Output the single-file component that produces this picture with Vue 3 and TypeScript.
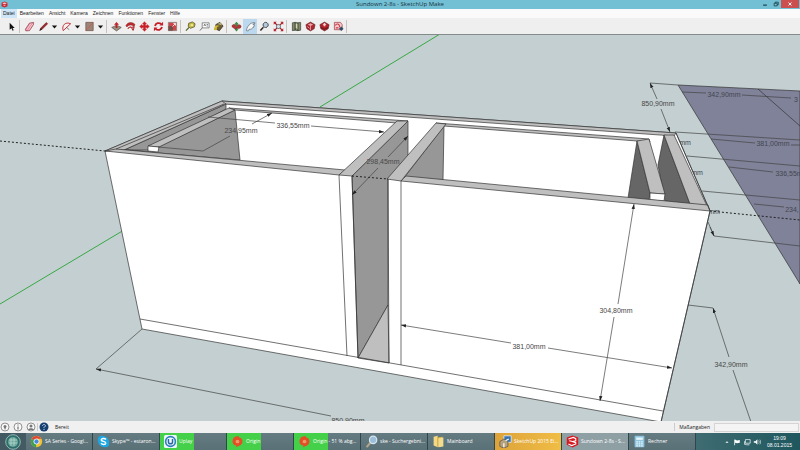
<script setup lang="ts">
import { ref } from 'vue'

interface Shape { d: string; fill?: string; stroke?: string; w?: number }
interface Tool { id: string; label: string; kind?: 'sep' | 'caret'; shapes?: Shape[] }

const active = ref('hand')
const measure = ref('')

const menus = ['Datei', 'Bearbeiten', 'Ansicht', 'Kamera', 'Zeichnen', 'Funktionen', 'Fenster', 'Hilfe']

const sep = (id: string): Tool => ({ id, label: '', kind: 'sep' })
const caret = (id: string): Tool => ({ id, label: 'Weitere Werkzeuge', kind: 'caret', shapes: [{ d: 'M2.5 4.5H9.5L6 8.5Z', fill: '#111' }] })

const tools: Tool[] = [
  { id: 'select', label: 'Auswählen', shapes: [{ d: 'M4 2V9.5L6 8L7.2 10.6L8.4 10L7.2 7.5H9.5Z', fill: '#111' }] },
  sep('s1'),
  { id: 'eraser', label: 'Radiergummi', shapes: [{ d: 'M1.5 9L6 2.2L10.5 1.5L10.3 4L6 10.5L2 10.8Z', fill: '#e58f9f', stroke: '#8b3644', w: 0.7 }, { d: 'M3 9.5L7.6 2.8M5 10L9.5 3.2', stroke: '#fbdfe3', w: 0.8 }] },
  { id: 'line', label: 'Linie', shapes: [{ d: 'M2 10.2L3 7.7L9 1.6L10.6 3L4.6 9Z', fill: '#a3242c', stroke: '#531419', w: 0.5 }, { d: 'M1.5 10.8L3 7.8L4.6 9Z', fill: '#222' }] },
  caret('c1'),
  { id: 'arc', label: 'Bogen', shapes: [{ d: 'M2.4 10.5C0.5 4.5 5 .5 10.5 3L2.4 10.5', fill: '#f8eeee', stroke: '#b82930', w: 1 }, { d: 'M6 7L9 9.5', stroke: '#444', w: 0.7 }] },
  caret('c2'),
  { id: 'rect', label: 'Rechteck', shapes: [{ d: 'M2 1.5H10V10.5H2Z', fill: '#9c8578', stroke: '#6e5148', w: 0.8 }, { d: 'M2 10.5L10 1.5', stroke: '#c9584e', w: 0.8 }] },
  caret('c3'),
  sep('s2'),
  { id: 'push', label: 'Drücken/Ziehen', shapes: [{ d: 'M.8 7L6 4.8L11.2 7L6 10.8Z', fill: '#9b9283', stroke: '#4d4741', w: 0.7 }, { d: 'M5 7.5V4.2H3.3L6 1L8.7 4.2H7V7.5Z', fill: '#c02026' }] },
  { id: 'follow', label: 'Folge mir', shapes: [{ d: 'M1 5C3 1 8 0.5 11 4L9.5 6C7 3.5 4 4 2 6.5Z', fill: '#c32930', stroke: '#72151b', w: 0.5 }, { d: 'M3 8.5C5 5.5 7 5.5 9 10.5M6 7L10 6.5L9 10', stroke: '#b22a30', w: 1.1 }] },
  { id: 'move', label: 'Verschieben', shapes: [{ d: 'M6 .7L8.2 3.2H7V5H8.8V3.8L11.3 6L8.8 8.2V7H7V8.8H8.2L6 11.3L3.8 8.8H5V7H3.2V8.2L.7 6L3.2 3.8V5H5V3.2H3.8Z', fill: '#c91f28', stroke: '#c91f28', w: 0.5 }] },
  { id: 'rotate', label: 'Drehen', shapes: [{ d: 'M2.2 5.5A4 4 0 0 1 9 3.5M9.8 6.5A4 4 0 0 1 3 8.5', stroke: '#c51e27', w: 2 }, { d: 'M7 4.8H11V.8ZM5 7.2H1V11.2Z', fill: '#c51e27' }] },
  { id: 'scale', label: 'Skalieren', shapes: [{ d: 'M1.5 1.5H10.5V10.5H1.5Z', fill: '#cf444b', stroke: '#8a7f7a', w: 0.8 }, { d: 'M1.5 5.5H6.5V10.5H1.5Z', fill: '#6f5048' }, { d: 'M6 6L9 3M7 2.7H9.3V5', stroke: '#fff', w: 0.9 }] },
  sep('s3'),
  { id: 'tape', label: 'Maßband', shapes: [{ d: 'M4 2.5L8 1L11 3L10.3 6.3L6 8L3.5 5.8Z', fill: '#c6bc42', stroke: '#4d4a2d', w: 0.8 }, { d: 'M6.2 3.5H8.7V5.5H6.2Z', fill: '#eee9a8' }, { d: 'M4.5 7L1 10.5', stroke: '#555b26', w: 1.3 }] },
  { id: 'text', label: 'Text', shapes: [{ d: 'M3.5 2H11V7.5H3.5Z', fill: '#fff', stroke: '#666', w: 0.8 }, { d: 'M5.3 5.5L6.3 3.5L7.2 5.5M8.3 3.8H9.8M8.3 5.5H9.8', stroke: '#333', w: 0.7 }, { d: 'M3.5 7.5L1 10.5', stroke: '#444', w: 0.8 }] },
  { id: 'paint', label: 'Farbeimer', shapes: [{ d: 'M3 4L7.5 1.5L11 5.5L7 10.5L3.5 9Z', fill: '#6c5b37', stroke: '#2e281e', w: 0.8 }, { d: 'M5 3.4L8 2L10 5Z', fill: '#c6ba7b' }, { d: 'M1 9.8C1 6 3 3 7 5.5L4.5 6.5L4 10Z', fill: '#d0b72e' }] },
  sep('s4'),
  { id: 'orbit', label: 'Rotieren', shapes: [{ d: 'M6 .8L8.2 3.4H7V9H8.2L6 11.4L3.8 9H5V3.4H3.8Z', fill: '#3e8b43' }, { d: 'M1 6C1 3.5 4 3.3 6 4.5C9 3.3 11 4.3 11 6C11 8.3 8 8.5 5.5 7.6L5 9L2 7Z', fill: '#b8333a', stroke: '#662225', w: 0.5 }, { d: 'M5 3.4H7V6H5Z', fill: '#3e8b43' }] },
  { id: 'hand', label: 'Schwenken', shapes: [{ d: 'M1.5 10.5C2 7 3.8 4.5 6.5 2.5L10.5 1.5L11 2.5L8.5 3.5L10.8 4.4L9.5 5.3L9.8 6.6L8.5 7C8 9 6 9.2 4.5 9L3.5 10.8Z', fill: '#f7f7f5', stroke: '#65717d', w: 0.8 }] },
  { id: 'zoom', label: 'Zoomen', shapes: [{ d: 'M4.8 6.7L1.5 10.4', stroke: '#2f2623', w: 1.6 }, { d: 'M7.3 1.5A2.8 2.8 0 1 1 7.2 1.5Z', fill: '#b7cadb', stroke: '#39404a', w: 1 }] },
  { id: 'extents', label: 'Zoom auf Modell', shapes: [{ d: 'M1.5 1.5L4.5 4.5M10.5 1.5L7.5 4.5M1.5 10.5L4.5 7.5M10.5 10.5L7.5 7.5', stroke: '#aa222a', w: 1.5 }, { d: 'M.8 .8H4L.8 4ZM11.2 .8V4L8 .8ZM.8 11.2V8L4 11.2ZM11.2 11.2H8L11.2 8Z', fill: '#b8202a' }, { d: 'M6 3.8A2.2 2.2 0 1 1 5.9 3.8Z', fill: '#d8dfe4', stroke: '#344044', w: 0.8 }] },
  sep('s5'),
  { id: 'map', label: 'Standort hinzufügen', shapes: [{ d: 'M1.5 2L4.5 1.5L7.5 2L10.5 1.5V10L7.5 10.5L4.5 10L1.5 10.5Z', fill: '#82896a', stroke: '#3e4638', w: 0.8 }, { d: 'M4.5 1.5V10M7.5 2V10.5', stroke: '#2d3529', w: 1 }, { d: 'M5.2 3H7V9L5.2 7Z', fill: '#d8d6ae' }] },
  { id: 'warehouse', label: '3D Warehouse', shapes: [{ d: 'M1 4L6 1.2L11 4L10 8.5L6 10.8L2 8.5Z', fill: '#aa2630', stroke: '#5d1a20', w: 0.6 }, { d: 'M3 4L6 2.5L9 4L6 5.5Z', fill: '#e9a7aa' }, { d: 'M6 5.5V10M2.5 6L5 8', stroke: '#efb9bc', w: 0.8 }] },
  { id: 'share', label: 'Modell teilen', shapes: [{ d: 'M1 4L6 1.2L11 4L10 8.5L6 10.8L2 8.5Z', fill: '#b32028', stroke: '#4c161b', w: 0.6 }, { d: 'M3.8 4L6 2L8.2 4H7V5.7H5V4Z', fill: '#f4d6d7' }, { d: 'M2 7L6 9L10 7', stroke: '#52151a', w: 0.9 }] },
  { id: 'layout', label: 'An LayOut senden', shapes: [{ d: 'M1.5 1.5H8.2L10 4V9.5H1.5Z', fill: '#f1cdd0', stroke: '#a73b43', w: 0.8 }, { d: 'M2.5 5C4 2 7 3 7.5 7M3 7.5H6', stroke: '#cf3a44', w: 1.2 }, { d: 'M9 6L11.5 8.5L9 11L6.5 8.5Z', fill: '#314e69' }] },
  sep('s6'),
]

interface Task { title: string; icon: string; progress?: number; look?: string }
const tasks: Task[] = [
  { title: 'SA Series - Googl...', icon: 'chrome' },
  { title: 'Skype™ - estaron...', icon: 'skype' },
  { title: 'Uplay', icon: 'uplay', progress: 51 },
  { title: 'Origin', icon: 'origin', progress: 51 },
  { title: 'Origin - 51 % abg...', icon: 'origin', progress: 51 },
  { title: 'ske - Suchergebni...', icon: 'search' },
  { title: 'Mainboard', icon: 'folder' },
  { title: 'SketchUp 2015 Ei...', icon: 'setup', look: 'alert' },
  { title: 'Sundown 2-8s - S...', icon: 'sketchup', look: 'current' },
  { title: 'Rechner', icon: 'calc' },
]

const light = '#bfbfbf'
const mid = '#979797'
const dark = '#666'

const faces = [
  { p: '105,151 222,101 676,133 710,211 661,422 142,329', f: '#fff' },
  { p: '222,101 676,133 674,136 224,104', f: light },
  { p: '124,150 226,104 226,109 150,150', f: mid },
  { p: '105,151 222,101 226,104 124,150', f: light },
  { p: '158,147 235,110 240,160 124,150 148,151', f: mid },
  { p: '229,108 408,121 397,123 235,110', f: light },
  { p: '148,146 229,108 235,110 159,147', f: light },
  { p: '148,146 159,147 158,152 148,151', f: '#fff' },
  { p: '105,151 116,149 345,170 339,175', f: light },
  { p: '352,176 408,121 408,156 388,179 388,305 358,358', f: mid },
  { p: '339,175 397,121 408,121 352,176', f: light },
  { p: '358,358 388,305 389,363', f: light },
  { p: '436,123 649,139 650,142 444,126', f: light },
  { p: '404,178 444,126 443,180', f: mid },
  { p: '387,179 436,123 446,124 401,181', f: light },
  { p: '637,141 628,198 649,200 650,193', f: dark },
  { p: '664,135 658,165 665,201 690,204', f: dark },
  { p: '637,141 649,139 665,194 650,193', f: light },
  { p: '650,193 665,194 664,201 650,200', f: '#fff' },
  { p: '664,135 674,135 707,206 690,204', f: light },
  { p: '401,181 406,176 708,205 710,211', f: light },
]

const edges = 'M116 149L224 104M140 319L663 411M339 175L347 356M352 176L358 358M388 179L389 363M401 181V365M676 133L710 211L661 422'

const plainDims = [
  'M158 147L203 151L230 136', 'M208 117L275 123', 'M650 83L678 85',
  'M675 132L800 140', 'M687 156L800 166', 'M702 191L800 200', 'M708 222L714 236L800 246',
  'M682 92L706 93', 'M742 95L791 98', 'M711 139L755 143', 'M791 145H800',
  'M729 167L773 172', 'M754 204L784 207', 'M688 305L713 308', 'M142 329L96 369',
  'M733 370L751 422',
]
const arrowDims = [
  'M252 124L272 113', 'M311 126L384 132', 'M388 157L408 136', 'M378 168L352 195',
  'M618 304L634 204', 'M614 317L600 401', 'M511 343L401 325', 'M548 348L672 368',
  'M729 357L713 308', 'M331 416L96 369', 'M657 99L650 83', 'M661 109L670 132', 'M710 227L714 236',
]

const labels = [
  { t: '336,55mm', x: 293, y: 128 }, { t: '234,95mm', x: 241, y: 133 },
  { t: '298,45mm', x: 383, y: 164 }, { t: '850,90mm', x: 658, y: 106 },
  { t: '304,80mm', x: 616, y: 313 }, { t: '381,00mm', x: 529, y: 349 },
  { t: '342,90mm', x: 731, y: 367 }, { t: '850,90mm', x: 348, y: 423 },
]
const backLabels = [
  { t: '342,90mm', x: 724, y: 97 }, { t: '3', x: 796, y: 102 },
  { t: '381,00mm', x: 773, y: 146 }, { t: '336,55m', x: 789, y: 176 },
  { t: '234,', x: 792, y: 212 }, { t: 'mm', x: 685, y: 145 },
  { t: 'mm', x: 697, y: 175 }, { t: 'mm', x: 714, y: 214 },
]
</script>

<template>
  <div class="window">
    <header class="titlebar">
      <svg class="app-icon" viewBox="0 0 12 12"><path d="M1 3L6 1L11 3V9L6 11L1 9Z" fill="#c72532" /><path d="M3 4L6 3L9 4L6 5ZM4 7L6 8L8 7" fill="#f3b8bc" stroke="#fff" stroke-width=".7" /></svg>
      <h1>Sundown 2-8s - SketchUp Make</h1>
      <div class="controls">
        <button aria-label="Minimieren"><svg viewBox="0 0 8 8"><path d="M1.5 5.5H6.5" stroke="#153944" stroke-width="1.5" /></svg></button>
        <button aria-label="Wiederherstellen"><svg viewBox="0 0 8 8"><path d="M3 3V1.5H7V5H5.5M1.5 3H5.5V6.5H1.5Z" fill="none" stroke="#153944" /></svg></button>
        <button class="close" aria-label="Schließen"><svg viewBox="0 0 8 8"><path d="M2 2L6 6M6 2L2 6" stroke="#fff" stroke-width="1.2" /></svg></button>
      </div>
    </header>

    <nav class="menubar">
      <button v-for="(m, i) in menus" :key="m" :class="{ open: i === 0 }">{{ m }}</button>
    </nav>

    <div class="toolbar">
      <template v-for="t in tools" :key="t.id">
        <span v-if="t.kind === 'sep'" class="sep"></span>
        <button v-else :class="{ caret: t.kind === 'caret', active: active === t.id }" :aria-label="t.label" @click="active = t.kind ? active : t.id">
          <svg viewBox="0 0 12 12">
            <path v-for="(s, i) in t.shapes" :key="i" :d="s.d" :fill="s.fill ?? 'none'" :stroke="s.stroke ?? 'none'" :stroke-width="s.w ?? 1" />
          </svg>
        </button>
      </template>
    </div>

    <main class="viewport">
      <svg class="model" viewBox="0 35 800 386" preserveAspectRatio="xMidYMin slice">
        <defs>
          <marker id="tip" viewBox="0 0 6 4" refX="6" refY="2" markerWidth="5" markerHeight="4" markerUnits="userSpaceOnUse" orient="auto"><path d="M0 0L6 2L0 4Z" fill="#222" /></marker>
        </defs>
        <path class="axis" d="M0 304L124 230M320 107L440 34" />
        <polygon points="678,85 800,91 800,284" fill="#7f8299" class="edge" />
        <path class="edge" d="M758 89L800 126" />
        <path class="dotted" d="M0 141L105 151M710 211L800 220" />
        <text v-for="(l, i) in backLabels" :key="i" :x="l.x" :y="l.y" class="dim-text back">{{ l.t }}</text>
        <polygon v-for="(f, i) in faces" :key="i" :points="f.p" :fill="f.f" class="edge" />
        <path class="edge" :d="edges" />
        <path class="dotted" d="M352 176L388 179" />
        <path v-for="d in plainDims" :key="d" :d="d" class="dim" />
        <path v-for="d in arrowDims" :key="d" :d="d" class="dim" marker-end="url(#tip)" />
        <text v-for="(l, i) in labels" :key="i" :x="l.x" :y="l.y" class="dim-text">{{ l.t }}</text>
      </svg>
    </main>

    <footer class="status">
      <svg viewBox="0 0 10 10"><circle cx="5" cy="5" r="4" class="ring" /><path d="M5 8L3.5 4.5A1.5 1.5 0 1 1 6.5 4.5Z" fill="#777" /></svg>
      <svg viewBox="0 0 10 10"><circle cx="5" cy="5" r="4" class="ring" /><path d="M5 2.5V3.5M5 4.5V7.5" stroke="#555" /></svg>
      <svg viewBox="0 0 10 10"><circle cx="5" cy="5" r="4" class="ring" /><circle cx="5" cy="4" r="1.5" fill="#777" /><path d="M2 8C2.5 5.5 7.5 5.5 8 8Z" fill="#777" /></svg>
      <i class="split"></i>
      <svg viewBox="0 0 10 10"><circle cx="5" cy="5" r="4.5" fill="#173f70" /><path d="M3.5 4C3.5 2 6.5 2 6.5 4L5 5.5V6.2M5 7V8" fill="none" stroke="#b9d2ea" /></svg>
      <span class="message">Bereit</span>
      <i class="split"></i>
      <label for="measure">Maßangaben</label>
      <input id="measure" v-model="measure" type="text" />
    </footer>

    <div class="taskbar">
      <button class="start" aria-label="Start">
        <svg viewBox="0 0 16 16"><circle cx="8" cy="8" r="7.3" fill="#2d6e6b" stroke="#91b8b3" /><circle cx="8" cy="8" r="5" fill="#6ba69b" /><path d="M4 6H12M4 9H12M6 4V12M9 4V12" stroke="#c2ded2" stroke-width=".7" /></svg>
      </button>
      <button v-for="(t, i) in tasks" :key="i" class="task" :class="t.look">
        <span v-if="t.progress" class="progress" :style="{ width: t.progress + '%' }"></span>
        <svg viewBox="0 0 16 16">
          <g v-if="t.icon === 'chrome'"><circle cx="8" cy="8" r="7" fill="#f2c331" /><path d="M8 8L2 4.5A7 7 0 0 1 14 4.5H8Z" fill="#dc4539" /><path d="M8 8L7.5 15A7 7 0 0 1 2 4.5Z" fill="#40a052" /><circle cx="8" cy="8" r="3.2" fill="#4b89df" stroke="#fff" /></g>
          <g v-else-if="t.icon === 'skype'"><circle cx="6" cy="6" r="5" fill="#1ba7e2" /><circle cx="10" cy="10" r="5" fill="#1ba7e2" /><circle cx="8" cy="8" r="6.5" fill="#1ba7e2" /><path d="M11 5.5C9.5 3.6 5 4 5.3 6.2C5.6 8.5 11 7.2 10.8 10C10.5 12.3 6.3 12.2 5 10" fill="none" stroke="#fff" stroke-width="1.8" /></g>
          <g v-else-if="t.icon === 'uplay'"><rect width="16" height="16" rx="2" fill="#edf6fa" /><circle cx="8" cy="8" r="6" fill="none" stroke="#2c80bc" stroke-width="2" /><path d="M5.5 5V8.5C5.5 11.5 10.5 11.5 10.5 8.5V5" fill="none" stroke="#2767a5" stroke-width="1.8" /></g>
          <g v-else-if="t.icon === 'origin'"><path d="M5 2L10 1L9 2.5C16 4 15 11 11 13L6 15L7 13C0 12 1 4 5 2Z" fill="#e44e25" /><circle cx="8" cy="8" r="2.3" fill="#e99a68" /></g>
          <g v-else-if="t.icon === 'search'"><path d="M7 9L2 15" stroke="#b4a68d" stroke-width="2.5" /><circle cx="10" cy="6" r="4.5" fill="#9bbfd8" stroke="#d6e5ef" stroke-width="1.5" /></g>
          <g v-else-if="t.icon === 'folder'"><path d="M2 2L7 1V15L2 13Z" fill="#f4d985" /><path d="M6 3L13 2V13L7 15Z" fill="#d9b44c" /><path d="M8 4L14 3V14L8 15Z" fill="#f2dc8d" /></g>
          <g v-else-if="t.icon === 'setup'"><path d="M6 1H15V9H6Z" fill="#3973ae" stroke="#e6eef5" /><path d="M1 8L6 5L11 8V14L6 16L1 14Z" fill="#b6a27d" stroke="#635c51" /><path d="M6 10V15M8 7L12 5" stroke="#fff" stroke-width="1.5" /></g>
          <g v-else-if="t.icon === 'sketchup'"><path d="M1 3L8 .5L15 3V12L8 15.5L1 12Z" fill="#d71920" /><path d="M3 5L9 3L12 4.5V7L8 8L12 9.5V11L7 13L3 11M4 7L8 8" fill="none" stroke="#fff" stroke-width="1.4" /></g>
          <g v-else><rect x="2" y="1" width="12" height="14" rx="1" fill="#8ec4de" /><path d="M4 3H12V6H4Z" fill="#e5f4fa" /><path d="M4 8.5H12M4 11H12M4 13.3H12" stroke="#e5f4fa" stroke-width="1.5" stroke-dasharray="2 1" /></g>
        </svg>
        <span class="task-title">{{ t.title }}</span>
      </button>
      <div class="tray">
        <svg viewBox="0 0 10 10"><path d="M3 6L5 4L7 6Z" fill="#fff" /></svg>
        <svg viewBox="0 0 10 10"><path d="M2 2V9" stroke="#fff" /><path d="M2.5 2L5 3L8.5 2.5V6L5 6.5L2.5 6Z" fill="#fff" /></svg>
        <svg viewBox="0 0 10 10"><path d="M3 2H9V6.5H3ZM4 8.5H8M2 4V8H4" fill="none" stroke="#e4f0f0" /></svg>
        <svg viewBox="0 0 10 10"><path d="M1 4H3L5.5 1.5V8.5L3 6H1Z" fill="#fff" /><path d="M7 3C8 4.5 8 5.5 7 7M8.5 2C10 4 10 6 8.5 8" fill="none" stroke="#e4f0f0" stroke-width=".8" /></svg>
        <time datetime="2015-01-08T19:09"><span>19:09</span><span>08.01.2015</span></time>
      </div>
    </div>
  </div>
</template>

<style>
body {
  margin: 0;
}
</style>

<style scoped>
.window {
  display: flex;
  flex-direction: column;
  height: 100vh;
  overflow: hidden;
  background: #f0f0f0;
  color: #222;
  font: 5px/7px 'Open Sans', 'Liberation Sans', sans-serif;
}
button {
  padding: 0;
  border: 0;
  background: none;
  color: inherit;
  font: inherit;
}
svg {
  display: block;
}
.titlebar {
  display: grid;
  grid-template-columns: 1fr auto 1fr;
  align-items: center;
  height: 9px;
  flex: none;
  background: #73bfd3;
}
.app-icon {
  width: 7px;
  height: 7px;
  margin-left: 1px;
}
h1 {
  margin: 0;
  color: #17333c;
  font-size: 6px;
  font-weight: 400;
  line-height: 9px;
}
.controls {
  display: flex;
  justify-content: flex-end;
  align-self: start;
}
.controls button {
  display: grid;
  place-items: center;
  width: 11px;
  height: 8px;
}
.controls svg {
  width: 6px;
  height: 6px;
}
.controls .close {
  width: 18px;
  margin-right: 1px;
  background: #cb4e50;
}
.menubar {
  display: flex;
  gap: 1px;
  height: 9px;
  flex: none;
  padding-left: 1px;
  background: #fafafa;
  font-family: 'Liberation Sans', sans-serif;
}
.menubar button {
  height: 9px;
  padding: 0 2px;
  line-height: 9px;
}
.menubar .open {
  background: #cfe6f8;
}
.toolbar {
  display: flex;
  align-items: center;
  height: 16px;
  flex: none;
  padding-left: 4px;
  border-bottom: 1px solid #858b8b;
  background: #efefef;
}
.toolbar button {
  display: grid;
  place-items: center;
  width: 14px;
  height: 15px;
}
.toolbar svg {
  width: 11px;
  height: 11px;
}
.toolbar .caret {
  width: 9px;
}
.toolbar .caret svg {
  width: 9px;
  height: 9px;
}
.toolbar .active {
  background: #bcd8ee;
}
.sep {
  width: 1px;
  height: 13px;
  margin: 0 2px 0 1px;
  background: #c7c2be;
}
.viewport {
  flex: 1;
  min-height: 0;
  background: #c3cfd0;
}
.model {
  width: 100%;
  height: 100%;
}
.edge {
  stroke: #333;
  stroke-width: 0.7;
  stroke-linejoin: round;
}
path.edge {
  fill: none;
}
.axis {
  fill: none;
  stroke: #39a845;
}
.dotted {
  fill: none;
  stroke: #222;
  stroke-dasharray: 2 2;
}
.dim {
  fill: none;
  stroke: #444;
  stroke-width: 0.7;
}
.dim-text {
  fill: #484848;
  font-family: 'Liberation Sans', sans-serif;
  font-size: 7px;
  text-anchor: middle;
}
.back {
  fill: #434650;
}
.status {
  display: flex;
  align-items: center;
  gap: 3px;
  height: 12px;
  flex: none;
  background: #f0f0f0;
}
.status svg {
  width: 10px;
  height: 10px;
}
.ring {
  fill: #f8f8f8;
  stroke: #777;
  stroke-width: 0.8;
}
.split {
  width: 1px;
  height: 8px;
  margin: 0 -2px;
  background: #ccc;
}
.message {
  flex: 1;
  padding-left: 3px;
}
.status label {
  padding: 0 1px 0 3px;
}
.status input {
  box-sizing: border-box;
  width: 85px;
  height: 9px;
  margin-right: 1px;
  padding: 0 2px;
  border: 1px solid #d4d4d4;
  background: #f4f4f4;
  font: inherit;
}
.taskbar {
  display: flex;
  gap: 1px;
  height: 17px;
  flex: none;
  background: linear-gradient(90deg, #435961, #58727a 50%, #4b7479 82%, #1e575e);
  color: #fff;
}
.start {
  display: grid;
  place-items: center;
  flex: 0 0 25px;
}
.start svg {
  width: 16px;
  height: 16px;
}
.task {
  position: relative;
  display: flex;
  align-items: center;
  gap: 2px;
  flex: 0 1 66px;
  min-width: 0;
  padding-left: 4px;
  background: linear-gradient(#657b82, #5a7077);
  box-shadow: 1px 0 #30464d;
  white-space: nowrap;
}
.task svg {
  position: relative;
  width: 13px;
  height: 13px;
  flex: none;
}
.task-title {
  position: relative;
}
.progress {
  position: absolute;
  top: 0;
  bottom: 0;
  left: 0;
  background: #45d049;
}
.alert {
  background: linear-gradient(90deg, #dda33a, #f0bd45);
}
.current {
  background: #8fa0a5;
}
.tray {
  display: flex;
  align-items: center;
  justify-content: flex-end;
  gap: 2px;
  flex: 1;
  padding-right: 8px;
}
.tray svg {
  width: 8px;
  height: 8px;
}
time {
  display: grid;
  margin-left: 4px;
  font-family: 'Liberation Sans', sans-serif;
  text-align: center;
}
</style>
